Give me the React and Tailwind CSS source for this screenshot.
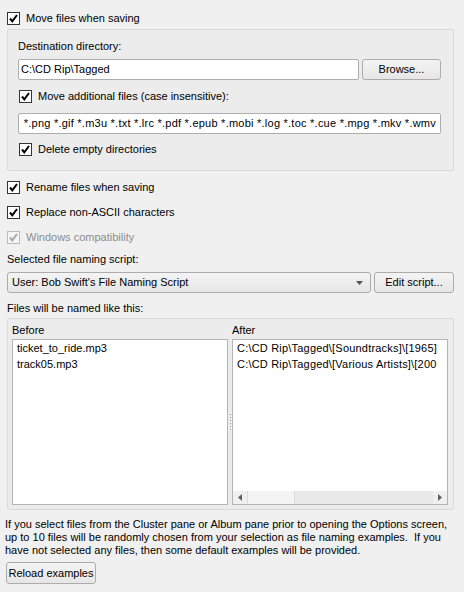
import React from "react";

function Check({ checked = true, disabled = false }) {
  return (
    <div
      className={
        "w-[13px] h-[13px] shrink-0 border flex items-center justify-center " +
        (disabled ? "border-[#bcbcbc] bg-[#f4f4f4]" : "border-[#333333] bg-white")
      }
    >
      {checked && (
        <svg width="11" height="11" viewBox="0 0 11 11">
          <path
            d="M2 5.5 L4.3 8.3 L9 2"
            fill="none"
            stroke={disabled ? "#a8a8a8" : "#000"}
            strokeWidth="2"
          />
        </svg>
      )}
    </div>
  );
}

function CheckRow({ label, disabled = false, className = "" }) {
  return (
    <div className={"flex items-center h-[13px] gap-[6px] " + className}>
      <Check disabled={disabled} />
      <span className={"leading-[13px] whitespace-nowrap " + (disabled ? "text-[#8d8d8d]" : "text-black")}>
        {label}
      </span>
    </div>
  );
}

function Button({ children, className = "" }) {
  return (
    <div
      className={
        "h-[21px] flex items-center justify-center border border-[#acacac] rounded-[3px] bg-gradient-to-b from-[#f4f4f4] to-[#e6e6e6] whitespace-nowrap " +
        className
      }
    >
      {children}
    </div>
  );
}

function Input({ children, className = "", right = false }) {
  return (
    <div
      className={
        "h-[21px] flex items-center border border-[#adadad] rounded-[2px] bg-white overflow-hidden whitespace-nowrap " +
        (right ? "justify-end pr-[4px] " : "pl-[2px] ") +
        className
      }
    >
      <span className="shrink-0">{children}</span>
    </div>
  );
}

export default function App() {
  return (
    <div
      className="w-[464px] h-[592px] bg-[#f0f0f0] text-[11px] leading-[13px] text-black overflow-hidden flex flex-col pl-[7px] pr-[10px]"
      style={{ fontFamily: '"Liberation Sans", Arial, sans-serif' }}
    >
      <CheckRow label="Move files when saving" className="mt-[12px]" />

      <div className="mt-[4px] h-[142px] border border-[#d9d9d9] rounded-[2px] bg-[#ececec] pl-[10px] pr-[12px] pt-[10px] flex flex-col">
        <div className="h-[13px]">Destination directory:</div>
        <div className="mt-[6px] flex gap-[3px]">
          <Input className="flex-1">C:\CD Rip\Tagged</Input>
          <Button className="w-[79px]">Browse...</Button>
        </div>
        <CheckRow label="Move additional files (case insensitive):" className="mt-[10px] ml-[1px]" />
        <Input className="mt-[10px] tracking-[0.24px]" right>
          *.png *.gif *.m3u *.txt *.lrc *.pdf *.epub *.mobi *.log *.toc *.cue *.mpg *.mkv *.wmv
        </Input>
        <CheckRow label="Delete empty directories" className="mt-[9px] ml-[1px]" />
      </div>

      <CheckRow label="Rename files when saving" className="mt-[10px]" />
      <CheckRow label="Replace non-ASCII characters" className="mt-[12px]" />
      <CheckRow label="Windows compatibility" disabled className="mt-[12px]" />

      <div className="mt-[9px] h-[13px]">Selected file naming script:</div>
      <div className="mt-[6px] flex gap-[3px]">
        <div className="flex-1 h-[21px] flex items-center justify-between border border-[#acacac] rounded-[3px] bg-gradient-to-b from-[#f4f4f4] to-[#e6e6e6] pl-[4px] pr-[7px]">
          <span>User: Bob Swift's File Naming Script</span>
          <svg width="7" height="4" viewBox="0 0 7 4">
            <path d="M0 0 H7 L3.5 4 Z" fill="#555" />
          </svg>
        </div>
        <Button className="w-[80px]">Edit script...</Button>
      </div>

      <div className="mt-[9px] h-[13px]">Files will be named like this:</div>

      <div className="mt-[3px] h-[192px] border border-[#d9d9d9] rounded-[2px] bg-[#ececec] pl-[4px] pr-[5px] pt-[5px] pb-[4px] flex">
        <div className="w-[216px] flex flex-col">
          <div className="h-[13px]">Before</div>
          <div className="mt-[2px] flex-1 border border-[#b4b4b4] bg-white pl-[4px] leading-[16px]">
            <div>ticket_to_ride.mp3</div>
            <div>track05.mp3</div>
          </div>
        </div>
        <div className="w-[4px] flex flex-col items-center justify-center gap-[2px] pt-[15px]">
          {[0, 1, 2, 3, 4, 5].map((i) => (
            <div key={i} className="w-[1px] h-[1px] bg-[#9a9a9a]" />
          ))}
        </div>
        <div className="flex-1 flex flex-col min-w-0">
          <div className="h-[13px]">After</div>
          <div className="mt-[2px] flex-1 border border-[#b4b4b4] bg-white flex flex-col min-h-0">
            <div className="flex-1 pl-[4px] leading-[16px] overflow-hidden whitespace-nowrap tracking-[0.2px]">
              <div>C:\CD Rip\Tagged\[Soundtracks]\[1965]</div>
              <div>C:\CD Rip\Tagged\[Various Artists]\[200</div>
            </div>
            <div className="h-[13px] flex bg-[#e8e8e8]">
              <div className="w-[14px] flex items-center justify-center bg-[#f0f0f0]">
                <svg width="4" height="7" viewBox="0 0 4 7">
                  <path d="M4 0 V7 L0 3.5 Z" fill="#606060" />
                </svg>
              </div>
              <div className="w-[48px] border-x border-[#dcdcdc] bg-[#f4f4f4]" />
              <div className="flex-1" />
              <div className="w-[14px] flex items-center justify-center bg-[#f0f0f0]">
                <svg width="4" height="7" viewBox="0 0 4 7">
                  <path d="M0 0 V7 L4 3.5 Z" fill="#606060" />
                </svg>
              </div>
            </div>
          </div>
        </div>
      </div>

      <div className="mt-[8px] -ml-[2px] whitespace-nowrap">
        If you select files from the Cluster pane or Album pane prior to opening the Options screen,
        <br />
        up to 10 files will be randomly chosen from your selection as file naming examples.&nbsp; If you
        <br />
        have not selected any files, then some default examples will be provided.
      </div>

      <div className="mt-[5px] -ml-[1px] flex">
        <Button className="w-[90px] h-[22px]">Reload examples</Button>
      </div>
    </div>
  );
}
